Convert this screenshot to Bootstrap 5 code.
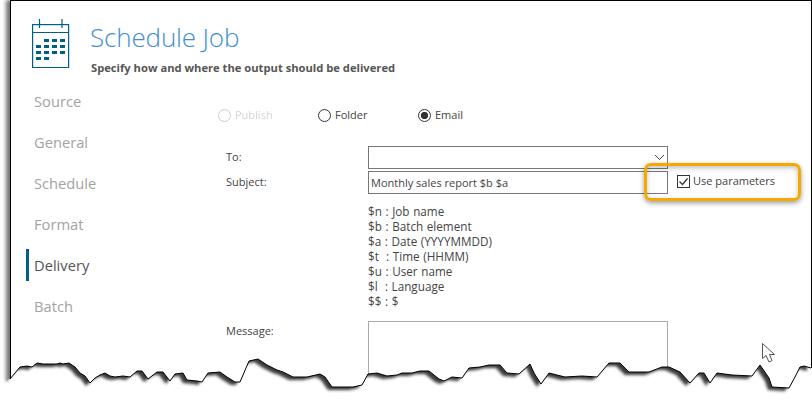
<!DOCTYPE html>
<html lang="en">
<head>
<meta charset="utf-8">
<title>Schedule Job</title>
<link href="https://cdn.jsdelivr.net/npm/bootstrap@5.3.0/dist/css/bootstrap.min.css" rel="stylesheet">
<style>
html,body{height:403px;overflow:hidden;background:#fff}
body{font-family:"Open Sans","Noto Sans",sans-serif;font-size:11px;color:#444;position:relative}
.sheet{margin-left:10px;width:802px;height:403px;border:solid #000;border-width:1px 1px 0 1px;box-shadow:-4px 0 4px rgba(0,0,0,.55);background:#fff;overflow:hidden}
.top-area{padding:17px 0 0 21px;height:79px}
.cal-ico{width:38px;height:50px;flex:none;display:block}
.head-txt{margin-left:20px}
.job-title{font-size:26px;font-weight:300;color:#3f8fd2;line-height:32px;margin:3px 0 0 0;letter-spacing:-.15px}
.job-sub{font-size:11.2px;font-weight:700;color:#555;line-height:14px;margin:8px 0 0 1px}
.side-nav{width:198px;flex:none;padding-left:15px;margin-top:5px}
.side-nav a{display:block;font-size:14.7px;color:#a3a3a3;line-height:32px;height:32px;padding-left:5px;margin-bottom:9px;text-decoration:none;border-left:3px solid transparent}
.side-nav a.on{color:#555;border-left-color:#005f85}
.form-pane{width:590px}
.radios{margin-top:23px;height:24px;align-items:center;padding-left:9px}
.radio-cell{width:100px;margin:0;padding:0;min-height:0;display:flex;align-items:center;gap:4px;color:#444}
.radio-cell.dim{color:#aaa}
.radio-cell .form-check-input,.radio-cell .form-check-input:checked{width:13px;height:13px;margin:0;float:none;border:1.3px solid #333;background-color:#fff;background-image:none;box-shadow:none}
.radio-cell .form-check-input:checked{background-image:radial-gradient(circle,#333 0,#333 3.4px,transparent 3.9px)}
.radio-cell .form-check-input:disabled{opacity:1;border-color:#ccc}
.radio-cell .form-check-label{opacity:1;color:inherit}
.line-row{display:flex;height:23px;margin-bottom:2px;align-items:center}
.line-lbl{width:159px;padding-left:17px;margin:0;color:#444}
.first-row{margin-top:19px}
.fld{width:300px;height:23px;border:1px solid #777;border-radius:0;padding:0 2px;font-size:11px;color:#444;line-height:21px;background-color:#fff;box-shadow:none}
.form-select.fld{background-image:none}
.chev-wrap{position:relative;width:300px}
.chev{position:absolute;right:3px;top:8px;width:11px;height:7px}
.param-check{margin:-2px 0 0 9px;gap:3px;min-height:0;padding:0;align-items:center;color:#444}
.param-check .form-check-input{width:13px;height:13px;margin:0;float:none;border:1px solid #333;border-radius:0;background-color:#fff;box-shadow:none;background-size:11px;background-image:url("data:image/svg+xml,%3csvg xmlns='http://www.w3.org/2000/svg' viewBox='0 0 11 11'%3e%3cpath d='M1.5 5.5l3 3 5-6' fill='none' stroke='%23333' stroke-width='1.3'/%3e%3c/svg%3e")}
.legend-list{margin:10px 0 0 159px;padding:0;list-style:none;line-height:15px;color:#444;font-size:11.7px;word-spacing:.6px}
.msg-row{display:flex;margin-top:12px}
.msg-row .line-lbl{padding-top:2px}
.msg-box{width:300px;height:90px;border:1px solid #aaa;border-radius:0;box-shadow:none;padding:0}
.hi-box{position:absolute;left:644px;top:163px;width:157px;height:38px;border:3px solid #f5a800;border-radius:7px;box-shadow:0 2px 5px rgba(0,0,0,.4),inset 0 2px 5px rgba(0,0,0,.25)}
.torn{position:absolute;left:0;top:0;width:812px;height:403px;pointer-events:none}
.mouse{position:absolute;left:761px;top:342px;width:15px;height:21px}
</style>
</head>
<body>
<div class="sheet">
  <div class="d-flex top-area">
    <svg class="cal-ico" viewBox="0 0 38 50" aria-hidden="true">
      <g fill="none" stroke="#005f85" stroke-width="1.2"><rect x=".6" y="6.600" width="36" height="43"/><path d="M.6 14.500h36M7.500 1v9M30 1v9"/></g>
      <g fill="#005f85"><rect x="12" y="21" width="5" height="3"/><rect x="20" y="21" width="5" height="3"/><rect x="28" y="21" width="5" height="3"/><rect x="4" y="27" width="5" height="3"/><rect x="12" y="27" width="5" height="3"/><rect x="20" y="27" width="5" height="3"/><rect x="28" y="27" width="5" height="3"/><rect x="4" y="33" width="5" height="3"/><rect x="12" y="33" width="5" height="3"/><rect x="20" y="33" width="5" height="3"/><rect x="28" y="33" width="5" height="3"/><rect x="4" y="39" width="5" height="3"/><rect x="12" y="39" width="5" height="3"/></g>
    </svg>
    <div class="head-txt">
      <h1 class="job-title">Schedule Job</h1>
      <p class="job-sub">Specify how and where the output should be delivered</p>
    </div>
  </div>
  <div class="d-flex">
    <nav class="side-nav nav flex-column">
      <a href="#">Source</a><a href="#">General</a><a href="#">Schedule</a><a href="#">Format</a><a href="#" class="on">Delivery</a><a href="#">Batch</a>
    </nav>
    <div class="form-pane">
      <div class="d-flex radios">
        <div class="form-check radio-cell dim"><input class="form-check-input" type="radio" name="dest" id="r1" disabled><label class="form-check-label" for="r1">Publish</label></div>
        <div class="form-check radio-cell"><input class="form-check-input" type="radio" name="dest" id="r2"><label class="form-check-label" for="r2">Folder</label></div>
        <div class="form-check radio-cell"><input class="form-check-input" type="radio" name="dest" id="r3" checked><label class="form-check-label" for="r3">Email</label></div>
      </div>
      <div class="line-row first-row">
        <label class="line-lbl">To:</label>
        <div class="chev-wrap"><select class="form-select fld"><option></option></select>
        <svg class="chev" viewBox="0 0 11 7"><path d="M1 1l4.500 4.500L10 1" fill="none" stroke="#444"/></svg></div>
      </div>
      <div class="line-row">
        <label class="line-lbl">Subject:</label>
        <input class="form-control fld" type="text" value="Monthly sales report $b $a">
        <div class="form-check d-flex param-check"><input class="form-check-input" type="checkbox" id="up" checked><label class="form-check-label" for="up">Use parameters</label></div>
      </div>
      <ul class="legend-list">
        <li>$n : Job name</li><li>$b : Batch element</li><li>$a : Date (YYYYMMDD)</li><li>$t&nbsp; : Time (HHMM)</li><li>$u : User name</li><li>$l&nbsp; : Language</li><li>$$ : $</li>
      </ul>
      <div class="msg-row"><label class="line-lbl">Message:</label><textarea class="form-control msg-box"></textarea></div>
    </div>
  </div>
</div>
<div class="hi-box"></div>
<svg class="torn" viewBox="0 0 812 403" aria-hidden="true">
  <defs>
    <filter id="bl" x="-5%" y="-50%" width="110%" height="200%"><feGaussianBlur stdDeviation="1.5"/></filter>
    <clipPath id="below"><path d="M0 379L10 379 15 373 20 367 27 366 32 367 37 363 43 364 57 364 60 363 63 364 69 363 75 367 80 373 85 376 90 383 95 378 100 375 105 373 110 376 115 377 123 376 130 377 137 371 142 371 148 379 157 372 163 372 170 381 175 374 183 373 187 380 197 381 202 382 208 373 220 372 227 377 235 382 240 382 249 361 258 359 267 365 277 370 283 372 293 377 307 377 320 374 325 377 332 387 353 387 362 385 368 374 377 373 387 376 397 375 402 373 412 373 420 371 429 371 439 379 444 381 452 377 462 378 469 368 480 367 489 365 500 365 507 373 519 374 530 364 534 373 541 384 549 373 565 377 582 376 597 377 609 363 620 363 629 372 649 372 662 367 669 367 680 372 690 383 699 373 704 373 710 383 717 373 732 375 752 376 760 365 769 378 772 387 789 388 795 377 800 367 804 366 811 368 812 368 812 403 0 403Z"/></clipPath>
  </defs>
  <path d="M0 379L10 379 15 373 20 367 27 366 32 367 37 363 43 364 57 364 60 363 63 364 69 363 75 367 80 373 85 376 90 383 95 378 100 375 105 373 110 376 115 377 123 376 130 377 137 371 142 371 148 379 157 372 163 372 170 381 175 374 183 373 187 380 197 381 202 382 208 373 220 372 227 377 235 382 240 382 249 361 258 359 267 365 277 370 283 372 293 377 307 377 320 374 325 377 332 387 353 387 362 385 368 374 377 373 387 376 397 375 402 373 412 373 420 371 429 371 439 379 444 381 452 377 462 378 469 368 480 367 489 365 500 365 507 373 519 374 530 364 534 373 541 384 549 373 565 377 582 376 597 377 609 363 620 363 629 372 649 372 662 367 669 367 680 372 690 383 699 373 704 373 710 383 717 373 732 375 752 376 760 365 769 378 772 387 789 388 795 377 800 367 804 366 811 368 812 368 812 403 0 403Z" fill="#fff"/>
  <g clip-path="url(#below)">
    <path transform="translate(-4 3)" filter="url(#bl)" fill="#3a3a3a" d="M10 300V379L15 373 20 367 27 366 32 367 37 363 43 364 57 364 60 363 63 364 69 363 75 367 80 373 85 376 90 383 95 378 100 375 105 373 110 376 115 377 123 376 130 377 137 371 142 371 148 379 157 372 163 372 170 381 175 374 183 373 187 380 197 381 202 382 208 373 220 372 227 377 235 382 240 382 249 361 258 359 267 365 277 370 283 372 293 377 307 377 320 374 325 377 332 387 353 387 362 385 368 374 377 373 387 376 397 375 402 373 412 373 420 371 429 371 439 379 444 381 452 377 462 378 469 368 480 367 489 365 500 365 507 373 519 374 530 364 534 373 541 384 549 373 565 377 582 376 597 377 609 363 620 363 629 372 649 372 662 367 669 367 680 372 690 383 699 373 704 373 710 383 717 373 732 375 752 376 760 365 769 378 772 387 789 388 795 377 800 367 804 366 811 368V300Z"/>
  </g>
  <path fill="none" stroke="#000" stroke-width="1" d="M10 379 15 373 20 367 27 366 32 367 37 363 43 364 57 364 60 363 63 364 69 363 75 367 80 373 85 376 90 383 95 378 100 375 105 373 110 376 115 377 123 376 130 377 137 371 142 371 148 379 157 372 163 372 170 381 175 374 183 373 187 380 197 381 202 382 208 373 220 372 227 377 235 382 240 382 249 361 258 359 267 365 277 370 283 372 293 377 307 377 320 374 325 377 332 387 353 387 362 385 368 374 377 373 387 376 397 375 402 373 412 373 420 371 429 371 439 379 444 381 452 377 462 378 469 368 480 367 489 365 500 365 507 373 519 374 530 364 534 373 541 384 549 373 565 377 582 376 597 377 609 363 620 363 629 372 649 372 662 367 669 367 680 372 690 383 699 373 704 373 710 383 717 373 732 375 752 376 760 365 769 378 772 387 789 388 795 377 800 367 804 366 811 368"/>
</svg>
<svg class="mouse" viewBox="0 0 15 21" aria-hidden="true"><path d="M1.500 1.500V16.500L5 13.500 8 20 11 18.500 8.500 12.500H13.500Z" fill="#fff" stroke="#555"/></svg>
<script src="https://cdn.jsdelivr.net/npm/bootstrap@5.3.0/dist/js/bootstrap.bundle.min.js"></script>
</body>
</html>
